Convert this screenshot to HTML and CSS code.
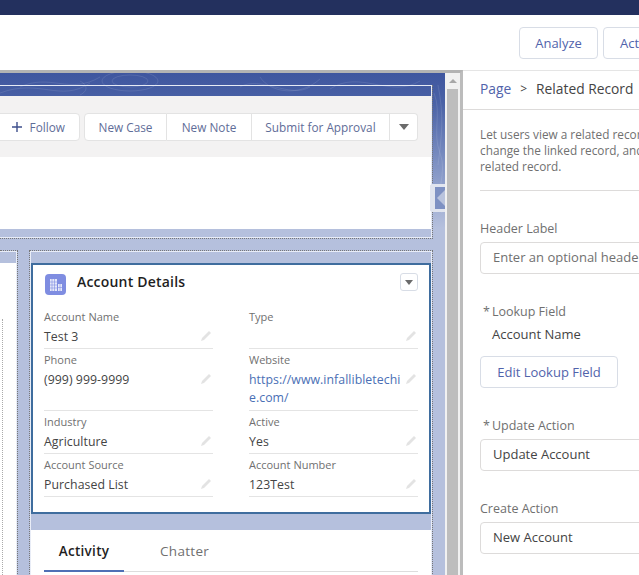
FILE: index.html
```html
<!DOCTYPE html>
<html lang="en">
<head>
<meta charset="utf-8">
<title>Lightning App Builder</title>
<link rel="stylesheet" href="styles.css">
</head>
<body>
<div class="topbar"></div>
<header class="toolbar">
  <button class="btn tool-btn analyze">Analyze</button>
  <button class="btn tool-btn activation">Activation</button>
</header>
<main class="main">
  <section class="canvas">
    <div class="stage">
      <svg class="topo" viewBox="0 0 445 180" width="445" height="180" fill="none" stroke="#ffffff" stroke-opacity=".1">
        <path d="M0 20C40 5 60 30 90 10M20 14C50 0 70 22 100 4M240 14c20-12 50 12 70 0M260 4c10 16 40 20 60 2M80 8c8 4 8 10 0 14M330 16c30-20 60 10 90-8"/>
        <ellipse cx="130" cy="8" rx="28" ry="10"/>
        <ellipse cx="130" cy="8" rx="18" ry="6"/>
        <path d="M434 20c8 20-2 40 6 60s-6 40 2 60M438 12c6 30 4 50 0 80"/>
      </svg>
      <div class="highlights">
        <div class="hl-inner">
          <div class="hl-actions">
            <button class="act follow"><svg class="plus" viewBox="0 0 12 12" width="12" height="12"><path d="M6 1v10M1 6h10" stroke="#3e4f8c" stroke-width="1.4"/></svg>Follow</button>
            <div class="group">
              <button class="group-item case">New Case</button>
              <button class="group-item note">New Note</button>
              <button class="group-item submit">Submit for Approval</button>
              <button class="group-item more"><span class="caret"></span></button>
            </div>
          </div>
          <div class="hl-body"></div>
          <div class="hl-foot"></div>
        </div>
      </div>
      <div class="columns">
        <div class="col-left"><div class="left-card"><div class="left-inner"></div></div></div>
        <div class="col-right">
          <article class="details">
            <div class="details-head">
              <span class="obj-icon">
                <svg viewBox="0 0 14 14" width="14" height="14"><path d="M1 1h7v12H1zM9 6h4v7H9z" fill="#ffffff" fill-opacity=".8"/><path d="M3 1v12M5.5 1v12M1 4h7M1 7h7M1 10h7M11 6v7M9 9.500h4" stroke="#7f8de1" stroke-width=".6" fill="none"/></svg>
              </span>
              <h2 class="details-title">Account Details</h2>
              <button class="mini-menu"><span class="caret small"></span></button>
            </div>
            <div class="fields">
              <div class="field"><div class="f-label">Account Name</div><div class="f-row"><div class="f-value">Test 3</div><svg class="pen" viewBox="0 0 14 14" width="14" height="14"><path d="M2 12l1-3 7-7 2 2-7 7z" fill="#e3e3e3"/></svg></div></div>
              <div class="field"><div class="f-label">Type</div><div class="f-row"><div class="f-value"></div><svg class="pen" viewBox="0 0 14 14" width="14" height="14"><path d="M2 12l1-3 7-7 2 2-7 7z" fill="#e3e3e3"/></svg></div></div>
              <div class="field"><div class="f-label">Phone</div><div class="f-row"><div class="f-value">(999) 999-9999</div><svg class="pen" viewBox="0 0 14 14" width="14" height="14"><path d="M2 12l1-3 7-7 2 2-7 7z" fill="#e3e3e3"/></svg></div></div>
              <div class="field"><div class="f-label">Website</div><div class="f-row"><div class="f-value link">https://www.infallibletechie.com/</div><svg class="pen" viewBox="0 0 14 14" width="14" height="14"><path d="M2 12l1-3 7-7 2 2-7 7z" fill="#e3e3e3"/></svg></div></div>
              <div class="field"><div class="f-label">Industry</div><div class="f-row"><div class="f-value">Agriculture</div><svg class="pen" viewBox="0 0 14 14" width="14" height="14"><path d="M2 12l1-3 7-7 2 2-7 7z" fill="#e3e3e3"/></svg></div></div>
              <div class="field"><div class="f-label">Active</div><div class="f-row"><div class="f-value">Yes</div><svg class="pen" viewBox="0 0 14 14" width="14" height="14"><path d="M2 12l1-3 7-7 2 2-7 7z" fill="#e3e3e3"/></svg></div></div>
              <div class="field"><div class="f-label">Account Source</div><div class="f-row"><div class="f-value">Purchased List</div><svg class="pen" viewBox="0 0 14 14" width="14" height="14"><path d="M2 12l1-3 7-7 2 2-7 7z" fill="#e3e3e3"/></svg></div></div>
              <div class="field"><div class="f-label">Account Number</div><div class="f-row"><div class="f-value">123Test</div><svg class="pen" viewBox="0 0 14 14" width="14" height="14"><path d="M2 12l1-3 7-7 2 2-7 7z" fill="#e3e3e3"/></svg></div></div>
            </div>
          </article>
          <div class="tabs-card">
            <div class="tabs">
              <div class="tab active">Activity</div>
              <div class="tab">Chatter</div>
            </div>
          </div>
        </div>
      </div>
      <div class="collapse"><span class="collapse-tri"></span></div>
    </div>
    <div class="scrollbar">
      <span class="scroll-up"></span>
      <span class="scroll-thumb"></span>
    </div>
  </section>
  <aside class="panel">
    <nav class="crumbs"><a class="crumb-link">Page</a><span class="crumb-sep">&gt;</span><span class="crumb-current">Related Record</span></nav>
    <div class="panel-body">
      <p class="desc">Let users view a related record, and let them<br>change the linked record, and edit the<br>related record.</p>
      <hr class="rule">
      <label class="p-label first">Header Label</label>
      <div class="input placeholder">Enter an optional header label</div>
      <label class="p-label lookup"><span class="req">*</span>Lookup Field</label>
      <div class="lookup-value">Account Name</div>
      <button class="btn edit-btn">Edit Lookup Field</button>
      <label class="p-label update"><span class="req">*</span>Update Action</label>
      <div class="input">Update Account</div>
      <label class="p-label create">Create Action</label>
      <div class="input">New Account</div>
    </div>
  </aside>
</main>
</body>
</html>
```
FILE: styles.css
```css
* { box-sizing: border-box; }
html, body { margin: 0; height: 100%; }
body {
  width: 639px;
  height: 575px;
  overflow: hidden;
  background: #fff;
  font-family: "Open Sans", "Noto Sans", sans-serif;
  color: #444;
  display: flex;
  flex-direction: column;
}
button { font: inherit; cursor: default; }
.topbar { height: 15px; background: #23305e; flex: none; }
.toolbar {
  height: 55px;
  flex: none;
  display: flex;
  gap: 5px;
  padding: 12px 0 0 519px;
  overflow: hidden;
  background: #fff;
}
.btn {
  background: #fff;
  border: 1px solid #d8dde6;
  border-radius: 4px;
  color: #5163ab;
  font-size: 13px;
  padding: 0;
  white-space: nowrap;
}
.tool-btn { height: 32px; flex: none; text-align: center; }
.analyze { width: 79px; }
.activation { padding: 0 16px; }
.main { flex: 1; display: flex; min-height: 0; }
.canvas {
  width: 463px;
  flex: none;
  display: flex;
  border-top: 3px solid #b3b3b3;
  border-right: 3px solid #bcbcbc;
  overflow: hidden;
}
.stage {
  position: relative;
  width: 445px;
  flex: none;
  overflow: hidden;
  background: linear-gradient(180deg, #3f569f 0, #4a62a6 30px, #7e91c3 90px, #b5c0dd 155px, #b5c0dd 100%);
  padding-top: 12px;
}
.topo { position: absolute; left: 0; top: 0; }
.highlights {
  position: relative;
  margin-left: -20px;
  margin-right: 12px;
  border-right: 1px dotted #777;
  border-bottom: 1px dotted #777;
}
.hl-inner {
  border-top: 1px solid #e6eaf5;
  border-right: 1px solid #e6eaf5;
  border-bottom: 1px solid #e9edf7;
  padding-top: 10px;
}
.hl-actions {
  height: 61px;
  background: #f3f2f2;
  display: flex;
  justify-content: flex-end;
  align-items: center;
  gap: 4px;
  padding-right: 13px;
}
.act, .group-item {
  background: #fff;
  border: 1px solid #e3e3e3;
  color: #5f6d98;
  font-size: 11.8px;
  height: 28px;
  padding: 0;
  white-space: nowrap;
}
.act { border-radius: 4px; }
.follow {
  width: 140px;
  display: flex;
  align-items: center;
  justify-content: flex-end;
  padding-right: 14px;
  gap: 7px;
}
.group { display: flex; }
.group-item { border-left: 0; }
.case { width: 83px; border-left: 1px solid #e3e3e3; border-radius: 4px 0 0 4px; }
.note { width: 85px; }
.submit { width: 138px; }
.more { width: 28px; border-radius: 0 4px 4px 0; display: flex; align-items: center; justify-content: center; }
.caret {
  width: 0; height: 0;
  border-left: 5.5px solid transparent;
  border-right: 5.5px solid transparent;
  border-top: 6px solid #6b6b6b;
}
.caret.small { border-left-width: 4.5px; border-right-width: 4.5px; border-top-width: 5px; }
.hl-body { height: 72px; background: #fff; }
.hl-foot { height: 8px; }
.columns {
  position: relative;
  display: flex;
  gap: 11px;
  margin-top: 11px;
  padding-right: 12px;
}
.col-left {
  width: 18px;
  flex: none;
  border-top: 1px dotted #777;
  border-right: 1px dotted #777;
}
.left-card {
  border-top: 1px solid #e9edf7;
  border-right: 1px solid #e9edf7;
  height: 330px;
  padding-top: 11px;
}
.left-inner {
  height: 320px;
  background: #fff;
  padding-top: 56px;
}
.left-inner::before {
  content: "";
  display: block;
  width: 2px;
  height: 260px;
  border-right: 1px dotted #aaa;
}
.col-right {
  flex: 1;
  border-top: 1px dotted #777;
  border-left: 1px dotted #777;
  border-right: 1px dotted #777;
  box-shadow: inset 1px 1px 0 #e9edf7, inset -1px 0 0 #e9edf7;
  padding: 12px 1px 0;
}
.details {
  background: #fff;
  border: 2px solid #3f6d9e;
  height: 251px;
}
.details-head {
  height: 41px;
  display: flex;
  align-items: flex-start;
  padding: 8px 11px 0;
}
.obj-icon {
  width: 21px; height: 21px;
  background: #7f8de1;
  border-radius: 4px;
  display: flex;
  align-items: center;
  justify-content: center;
  flex: none;
  margin: 1px 0 0 1px;
}
.details-title {
  margin: 0 0 0 11px;
  flex: 1;
  font-size: 14px;
  line-height: 18px;
  font-weight: 600;
  color: #1f1f1f;
  letter-spacing: .2px;
}
.mini-menu {
  width: 18px; height: 18px;
  background: #fff;
  border: 1px solid #d8dde6;
  border-radius: 3px;
  padding: 0;
  display: flex;
  align-items: center;
  justify-content: center;
}
.fields {
  display: grid;
  grid-template-columns: 169px 169px;
  column-gap: 36px;
  padding: 0 11px;
}
.field {
  padding: 4px 0 2px;
  border-bottom: 1px solid #e4e4e4;
}
.f-label { font-size: 11px; line-height: 14px; color: #707070; }
.f-row { display: flex; align-items: flex-start; margin-top: 3px; }
.f-value {
  flex: 1;
  min-width: 0;
  font-size: 12.3px;
  line-height: 18px;
  min-height: 18px;
  padding-top: 1px;
  color: #444;
  word-break: break-all;
  letter-spacing: .05px;
}
.link { color: #4a6fb5; padding-right: 2px; padding-bottom: 1px; }
.pen { flex: none; margin: 2px 0 0 0; }
.tabs-card {
  background: #fff;
  margin-top: 16px;
  height: 60px;
  padding: 0 13px;
}
.tabs { display: flex; border-bottom: 1px solid #dddddd; height: 42px; }
.tab {
  font-size: 13.5px;
  color: #707070;
  line-height: 42px;
  width: 116px;
  letter-spacing: .3px;
}
.tab.active {
  width: 80px;
  margin-right: 36px;
  color: #1f1f1f;
  font-weight: 600;
  text-align: center;
  border-bottom: 2px solid #4f6fb5;
  height: 42px;
}
.collapse {
  position: absolute;
  right: 0;
  top: 111px;
  width: 15px;
  height: 28px;
  background: #7e91c3;
  border: 3px solid #e1e5ef;
  border-left-width: 5px;
  border-right: 0;
  border-radius: 3px 0 0 3px;
  display: flex;
  align-items: center;
  justify-content: flex-end;
}
.collapse-tri {
  width: 0; height: 0;
  border-top: 8px solid transparent;
  border-bottom: 8px solid transparent;
  border-right: 8px solid #b9c3dd;
}
.scrollbar {
  flex: 1;
  background: #f1f1f1;
  display: flex;
  flex-direction: column;
  align-items: center;
}
.scroll-up {
  margin-top: 6px;
  width: 0; height: 0;
  border-left: 4px solid transparent;
  border-right: 4px solid transparent;
  border-bottom: 4px solid #a8a8a8;
  flex: none;
}
.scroll-thumb { margin-top: 6px; width: 11px; flex: 1; background: #bdbdbd; }
.panel {
  flex: 1;
  min-width: 0;
  overflow: hidden;
  background: #fff;
  border-top: 1px solid #e5e5e5;
}
.crumbs {
  height: 39px;
  border-bottom: 1px solid #dddbda;
  display: flex;
  align-items: center;
  padding: 0 0 3px 17px;
  font-size: 13.8px;
  white-space: nowrap;
}
.crumb-link { color: #5163ab; }
.crumb-sep { margin: 0 9px; font-size: 12px; }
.panel-body { padding: 0 0 0 17px; width: 280px; }
.desc {
  margin: 16px 0 0;
  font-size: 11.8px;
  line-height: 16px;
  color: #707070;
  white-space: nowrap;
}
.rule { border: 0; border-top: 1px solid #dddbda; margin: 16px 0 0; }
.p-label { display: block; font-size: 12.5px; line-height: 16px; color: #707070; margin-top: 30px; }
.req { margin: 0 2px 0 3px; }
.input {
  margin-top: 5px;
  height: 32px;
  border: 1px solid #dddbda;
  border-radius: 4px;
  padding: 0 12px;
  font-size: 13px;
  line-height: 29px;
  color: #444;
  white-space: nowrap;
  overflow: hidden;
}
.placeholder { color: #707070; }
.lookup-value { margin: 5px 0 0 12px; font-size: 13px; line-height: 18px; color: #444; }
.edit-btn { display: block; width: 138px; height: 32px; margin-top: 13px; }
```
